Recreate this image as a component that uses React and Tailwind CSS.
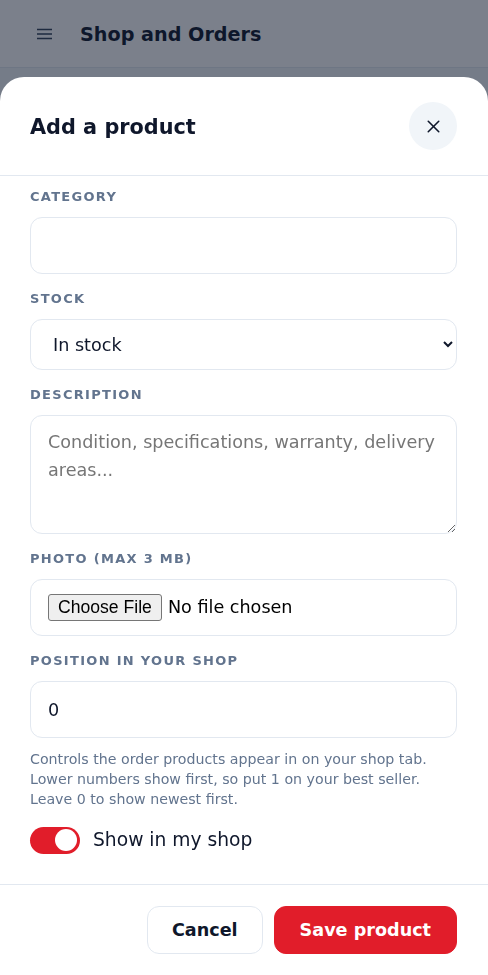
import React, { useState } from "react";
import { X } from "lucide-react";

export default function App() {
  const [visible, setVisible] = useState(true);

  return (
    <div className="min-h-screen bg-slate-100 font-['DejaVu_Sans',sans-serif] text-slate-900">
      {/* Page header behind the sheet */}
      <header className="h-[68px] bg-white border-b border-slate-200 flex items-center">
        <button className="ml-[24px] w-10 h-10 flex items-center justify-center text-slate-700">
          <svg width="15" height="12" viewBox="0 0 15 12" fill="none">
            <path d="M0 1.5h15M0 6h15M0 10.5h15" stroke="currentColor" strokeWidth="1.6" />
          </svg>
        </button>
        <h1 className="ml-4 pt-1 text-[19.2px] font-bold">Shop and Orders</h1>
      </header>

      {/* Dim overlay */}
      <div className="fixed inset-0 bg-slate-900/55"></div>

      {/* Bottom sheet */}
      <div className="fixed inset-x-0 top-[77px] bottom-0 bg-white rounded-t-3xl flex flex-col shadow-xl">
        {/* Sheet header */}
        <div className="flex items-center justify-between pl-[30px] pr-[31px] py-[25px] border-b border-slate-200">
          <h2 className="pt-1 text-[20.8px] font-bold">Add a product</h2>
          <button className="w-12 h-12 rounded-full bg-slate-100 flex items-center justify-center text-slate-900">
            <X size={21} strokeWidth={1.75} />
          </button>
        </div>

        {/* Form body */}
        <div className="flex-1 overflow-y-auto pl-[30px] pr-[31px] pt-[13px] pb-8">
          <div className="flex flex-col gap-[17px]">
            <div>
              <label className="block text-[13px] leading-4 font-bold uppercase tracking-widest text-slate-500 mb-3">
                Category
              </label>
              <input type="text" className="w-full h-[57px] pl-[17px] pr-4 text-[17.6px] border border-slate-200 rounded-xl outline-none" />
            </div>

            <div>
              <label className="block text-[13px] leading-4 font-bold uppercase tracking-widest text-slate-500 mb-3">
                Stock
              </label>
              <select className="w-full h-[51px] pl-[18px] pr-[22px] text-[17.6px] border border-slate-200 rounded-xl bg-white outline-none">
                <option>In stock</option>
                <option>Out of stock</option>
              </select>
            </div>

            <div>
              <label className="block text-[13px] leading-4 font-bold uppercase tracking-widest text-slate-500 mb-3">
                Description
              </label>
              <textarea
                className="block w-full h-[119px] pl-[17px] pr-4 py-3 text-[17.6px] leading-7 border border-slate-200 rounded-xl outline-none placeholder:text-[#767676]"
                placeholder="Condition, specifications, warranty, delivery areas..."
              ></textarea>
            </div>

            <div>
              <label className="block text-[13px] leading-4 font-bold uppercase tracking-widest text-slate-500 mb-3">
                Photo (max 3 MB)
              </label>
              <div className="h-[57px] pl-[17px] pr-4 flex items-center border border-slate-200 rounded-xl">
                <input
                  type="file"
                  className="text-[17.6px] leading-[21px] text-black file:font-['Liberation_Sans',Arial,sans-serif] file:mr-1.5 file:px-[9px] file:py-[2px] file:border file:border-[#767676] file:rounded-[3px] file:bg-[#efefef] file:text-black"
                />
              </div>
            </div>

            <div>
              <label className="block text-[13px] leading-4 font-bold uppercase tracking-widest text-slate-500 mb-3">
                Position in your shop
              </label>
              <input type="number" defaultValue="0" className="w-full h-[57px] pl-[17px] pr-4 text-[17.6px] border border-slate-200 rounded-xl outline-none" />
              <p className="mt-[11px] text-[14.2px] leading-5 text-slate-500">
                Controls the order products appear in on your shop tab. Lower numbers show first, so put 1 on your best seller. Leave 0 to show newest first.
              </p>
            </div>

            <label className="flex items-center gap-[13px] cursor-pointer">
              <button
                type="button"
                onClick={() => setVisible(!visible)}
                className={`relative w-[50px] h-[27px] rounded-full ${visible ? "bg-[#e11d2a]" : "bg-slate-300"}`}
              >
                <span className={`absolute top-[2.5px] w-[22px] h-[22px] rounded-full bg-white ${visible ? "right-[3px]" : "left-[3px]"}`}></span>
              </button>
              <span className="text-[18.7px] leading-7">Show in my shop</span>
            </label>
          </div>
        </div>

        {/* Footer */}
        <div className="flex justify-end gap-[11px] pl-[30px] pr-[31px] pt-[21px] pb-[21px] border-t border-slate-200">
          <button className="px-6 py-[9px] text-[17.6px] leading-7 font-bold border border-slate-200 rounded-xl bg-white">
            Cancel
          </button>
          <button className="px-[25px] py-[9px] text-[17.6px] leading-7 font-bold text-white bg-[#e11d2a] border border-[#e11d2a] rounded-xl">
            Save product
          </button>
        </div>
      </div>
    </div>
  );
}
